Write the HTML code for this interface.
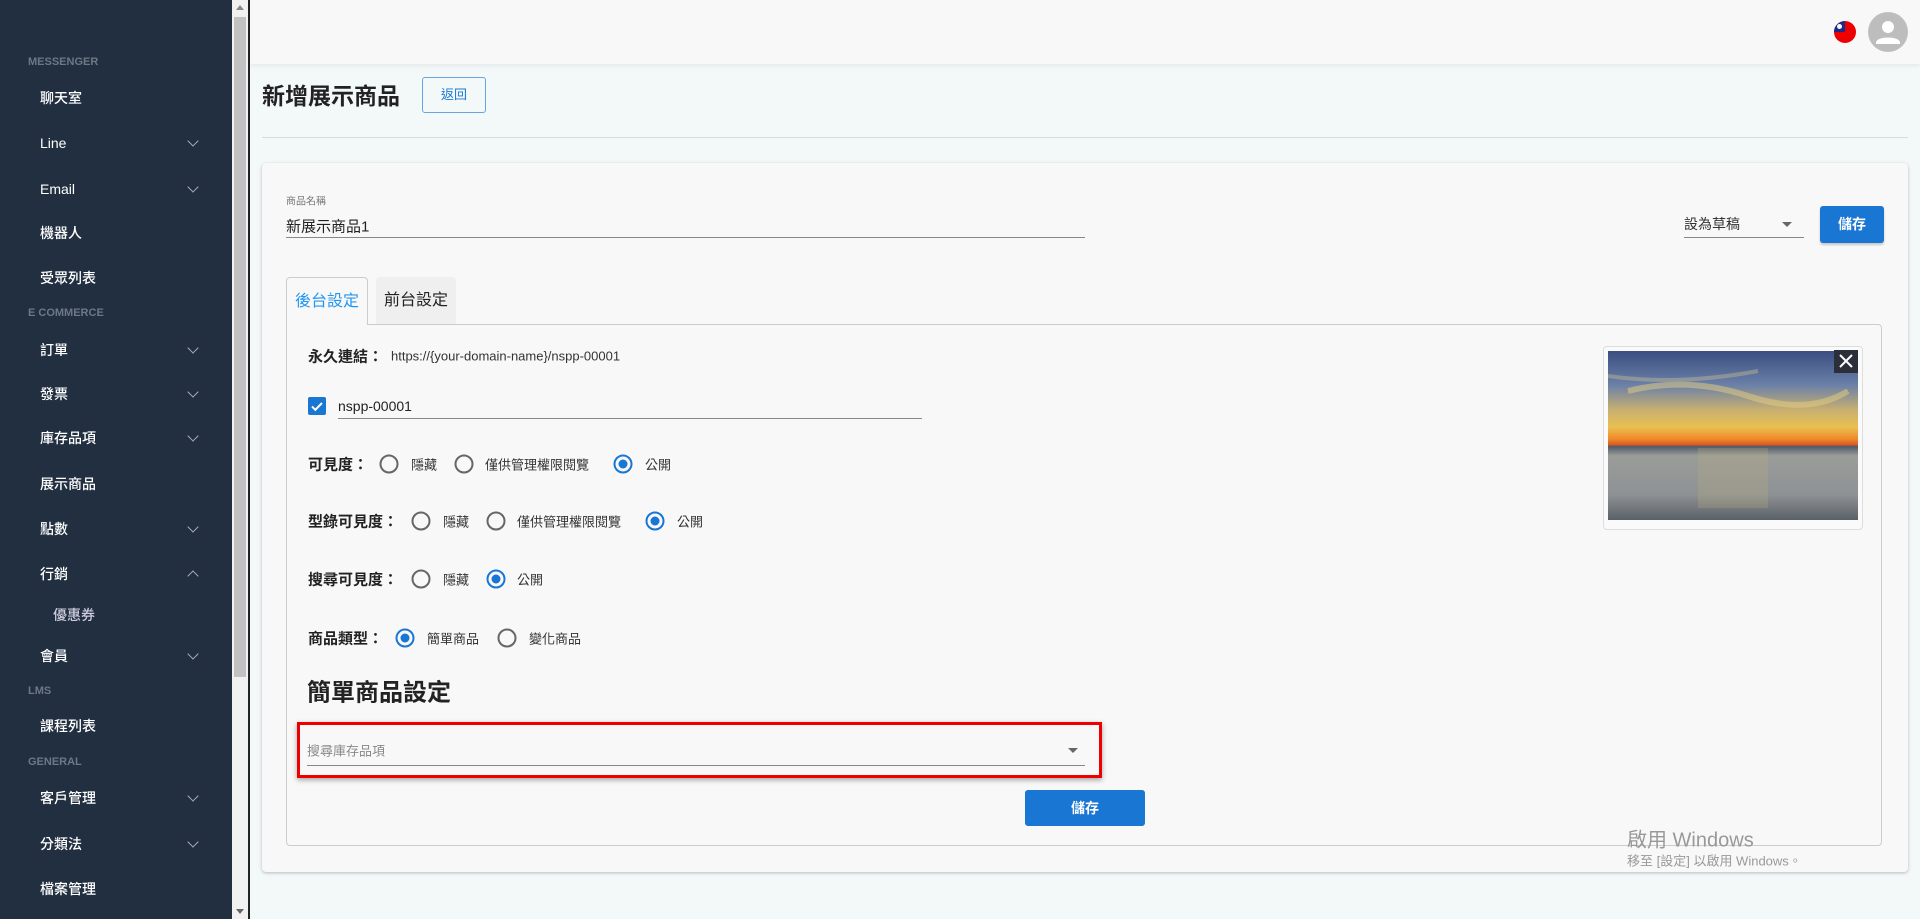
<!DOCTYPE html>
<html><head><meta charset="utf-8"><style>
*{box-sizing:border-box;margin:0;padding:0}
body{width:1920px;height:919px;overflow:hidden;position:relative;background:#f3f8f8;font-family:"Liberation Sans","Noto Sans CJK TC",sans-serif;color:#222}
.a{position:absolute;white-space:nowrap}
#sb{position:absolute;left:0;top:0;width:232px;height:919px;background:#212f40}
.sec{position:absolute;left:28px;font-size:11px;font-weight:bold;color:#6c7886;transform:translateY(-50%)}
.it{position:absolute;left:40px;font-size:14px;color:#fff;transform:translateY(-50%);font-weight:500}
.chev{position:absolute;left:189px;width:8px;height:8px;border-right:1.5px solid #aab;border-bottom:1.5px solid #aab;transform:translateY(-75%) rotate(45deg)}
.chev.up{transform:translateY(-25%) rotate(-135deg)}
.rad{position:absolute;width:19px;height:19px;border:2px solid #666;border-radius:50%;transform:translate(-50%,-50%)}
.rad.on{border-color:#1976d2}
.rad.on::after{content:"";position:absolute;left:3px;top:3px;width:9px;height:9px;border-radius:50%;background:#1976d2}
.lbl{position:absolute;font-size:15px;font-weight:bold;color:#222;transform:translateY(-50%)}
.opt{position:absolute;font-size:13px;color:#333;transform:translateY(-50%)}
</style></head><body>
<div id="sb">
<div class="sec" style="top:62px">MESSENGER</div>
<div class="it" style="top:98px">聊天室</div>
<div class="it" style="top:143px">Line</div><div class="chev" style="top:143px"></div>
<div class="it" style="top:189px">Email</div><div class="chev" style="top:189px"></div>
<div class="it" style="top:233px">機器人</div>
<div class="it" style="top:278px">受眾列表</div>
<div class="sec" style="top:313px">E COMMERCE</div>
<div class="it" style="top:350px">訂單</div><div class="chev" style="top:350px"></div>
<div class="it" style="top:394px">發票</div><div class="chev" style="top:394px"></div>
<div class="it" style="top:438px">庫存品項</div><div class="chev" style="top:438px"></div>
<div class="it" style="top:484px">展示商品</div>
<div class="it" style="top:529px">點數</div><div class="chev" style="top:529px"></div>
<div class="it" style="top:574px">行銷</div><div class="chev up" style="top:574px"></div>
<div class="it" style="top:615px;left:53px;color:#ccd">優惠券</div>
<div class="it" style="top:656px">會員</div><div class="chev" style="top:656px"></div>
<div class="sec" style="top:691px">LMS</div>
<div class="it" style="top:726px">課程列表</div>
<div class="sec" style="top:762px">GENERAL</div>
<div class="it" style="top:798px">客戶管理</div><div class="chev" style="top:798px"></div>
<div class="it" style="top:844px">分類法</div><div class="chev" style="top:844px"></div>
<div class="it" style="top:889px">檔案管理</div>
</div>
<div class="a" style="left:232px;top:0;width:16px;height:919px;background:#f1f1f1"></div>
<div class="a" style="left:234px;top:17px;width:12px;height:660px;background:#c1c1c1"></div>
<div class="a" style="left:236px;top:5px;width:0;height:0;border:4px solid transparent;border-bottom:5px solid #888;border-top:0"></div>
<div class="a" style="left:236px;top:909px;width:0;height:0;border:4px solid transparent;border-top:5px solid #666;border-bottom:0"></div>
<div class="a" style="left:248px;top:0;width:2px;height:919px;background:#222"></div>

<div class="a" style="left:250px;top:0;width:1670px;height:64px;background:#f8f8f8;box-shadow:0 2px 4px rgba(0,0,0,.06)"></div>
<svg class="a" style="left:1834px;top:21px" width="22" height="22" viewBox="0 0 22 22"><defs><clipPath id="c"><circle cx="11" cy="11" r="11"/></clipPath></defs><g clip-path="url(#c)"><rect width="22" height="22" fill="#e00"/><rect width="11" height="11" fill="#1c2a8c"/><circle cx="5.5" cy="5.5" r="2.5" fill="#fff"/></g></svg>
<svg class="a" style="left:1868px;top:12px" width="40" height="40" viewBox="0 0 40 40"><circle cx="20" cy="20" r="20" fill="#bdbdbd"/><circle cx="20" cy="15" r="6" fill="#fff"/><path d="M8 30c2-6 22-6 24 0v2H8z" fill="#fff"/></svg>

<div class="a" style="left:262px;top:94px;font-size:23px;font-weight:bold;transform:translateY(-50%)">新增展示商品</div>
<div class="a" style="left:422px;top:77px;width:64px;height:36px;border:1px solid #6aa4e0;border-radius:3px;color:#1976d2;font-size:13px;text-align:center;line-height:34px">返回</div>
<div class="a" style="left:262px;top:137px;width:1646px;height:1px;background:#d6dcdc"></div>

<div class="a" style="left:262px;top:163px;width:1646px;height:709px;background:#f8f8f8;border-radius:4px;box-shadow:0 1px 3px rgba(0,0,0,.25)"></div>
<div class="a" style="left:286px;top:200px;font-size:10px;color:#777;transform:translateY(-50%)">商品名稱</div>
<div class="a" style="left:286px;top:226px;font-size:15px;transform:translateY(-50%)">新展示商品1</div>
<div class="a" style="left:286px;top:237px;width:799px;height:1px;background:#888"></div>
<div class="a" style="left:1684px;top:224px;font-size:14px;transform:translateY(-50%);color:#333">設為草稿</div>
<div class="a" style="left:1782px;top:222px;border:5px solid transparent;border-top:5px solid #666;border-bottom:0"></div>
<div class="a" style="left:1684px;top:237px;width:120px;height:1px;background:#888"></div>
<div class="a" style="left:1820px;top:206px;width:64px;height:37px;background:#1976d2;border-radius:3px;color:#fff;font-size:14px;font-weight:bold;text-align:center;line-height:37px;box-shadow:0 2px 2px rgba(0,0,0,.2)">儲存</div>

<div class="a" style="left:286px;top:324px;width:1596px;height:522px;border:1px solid #ccc;border-radius:0 4px 4px 4px"></div>
<div class="a" style="left:286px;top:277px;width:82px;height:48px;border:1px solid #ccc;border-bottom:none;border-radius:4px 4px 0 0;background:#f8f8f8;color:#2196f3;font-size:16px;text-align:center;line-height:48px">後台設定</div>
<div class="a" style="left:376px;top:277px;width:80px;height:47px;background:#efefef;border-radius:4px 4px 0 0;font-size:16px;text-align:center;line-height:48px">前台設定</div>

<div class="lbl" style="left:308px;top:356px">永久連結：</div>
<div class="opt" style="left:391px;top:356px;font-size:13px">https://{your-domain-name}/nspp-00001</div>
<div class="a" style="left:308px;top:397px;width:18px;height:18px;background:#1976d2;border-radius:2px"></div>
<svg class="a" style="left:308px;top:397px" width="18" height="18" viewBox="0 0 18 18"><path d="M4 9.5l3.3 3.3L14 6" stroke="#fff" stroke-width="2" fill="none"/></svg>
<div class="a" style="left:338px;top:406px;font-size:14px;transform:translateY(-50%)">nspp-00001</div>
<div class="a" style="left:338px;top:418px;width:584px;height:1px;background:#888"></div>

<div class="lbl" style="left:308px;top:464px">可見度：</div>
<div class="rad" style="left:389px;top:464px"></div><div class="opt" style="left:411px;top:464px">隱藏</div>
<div class="rad" style="left:464px;top:464px"></div><div class="opt" style="left:485px;top:464px">僅供管理權限閱覽</div>
<div class="rad on" style="left:623px;top:464px"></div><div class="opt" style="left:645px;top:464px">公開</div>

<div class="lbl" style="left:308px;top:521px">型錄可見度：</div>
<div class="rad" style="left:421px;top:521px"></div><div class="opt" style="left:443px;top:521px">隱藏</div>
<div class="rad" style="left:496px;top:521px"></div><div class="opt" style="left:517px;top:521px">僅供管理權限閱覽</div>
<div class="rad on" style="left:655px;top:521px"></div><div class="opt" style="left:677px;top:521px">公開</div>

<div class="lbl" style="left:308px;top:579px">搜尋可見度：</div>
<div class="rad" style="left:421px;top:579px"></div><div class="opt" style="left:443px;top:579px">隱藏</div>
<div class="rad on" style="left:496px;top:579px"></div><div class="opt" style="left:517px;top:579px">公開</div>

<div class="lbl" style="left:308px;top:638px">商品類型：</div>
<div class="rad on" style="left:405px;top:638px"></div><div class="opt" style="left:427px;top:638px">簡單商品</div>
<div class="rad" style="left:507px;top:638px"></div><div class="opt" style="left:529px;top:638px">變化商品</div>

<div class="a" style="left:307px;top:690px;font-size:24px;font-weight:bold;transform:translateY(-50%)">簡單商品設定</div>
<div class="a" style="left:297px;top:722px;width:805px;height:56px;border:3px solid #e00;box-shadow:0 2px 5px rgba(0,0,0,.35)"></div>
<div class="a" style="left:307px;top:750px;font-size:13px;color:#888;transform:translateY(-50%)">搜尋庫存品項</div>
<div class="a" style="left:1068px;top:748px;border:5px solid transparent;border-top:5px solid #666;border-bottom:0"></div>
<div class="a" style="left:307px;top:765px;width:778px;height:1px;background:#888"></div>
<div class="a" style="left:1025px;top:790px;width:120px;height:36px;background:#1976d2;border-radius:3px;color:#fff;font-size:14px;font-weight:bold;text-align:center;line-height:36px">儲存</div>

<div class="a" style="left:1603px;top:346px;width:260px;height:184px;border:1px solid #ddd;border-radius:4px;background:#fafafa"></div>
<svg class="a" style="left:1608px;top:351px" width="250" height="169" viewBox="0 0 250 169"><defs><linearGradient id="g" x1="0" y1="0" x2="0" y2="1"><stop offset="0" stop-color="#3a4f80"/><stop offset=".2" stop-color="#6a80a8"/><stop offset=".35" stop-color="#c8b070"/><stop offset=".45" stop-color="#e8c050"/><stop offset=".52" stop-color="#f08a2a"/><stop offset=".555" stop-color="#d85a20"/><stop offset=".565" stop-color="#505a68"/><stop offset=".62" stop-color="#9a9c98"/><stop offset=".85" stop-color="#8e9294"/><stop offset="1" stop-color="#5a6068"/></linearGradient></defs><rect width="250" height="169" fill="url(#g)"/><path d="M20 40q60-15 120 5t100-5" stroke="#e8d080" stroke-width="6" fill="none" opacity=".5"/><path d="M0 25q70 10 150-5" stroke="#d0c090" stroke-width="4" fill="none" opacity=".4"/><rect x="90" y="97" width="70" height="60" fill="#c0b080" opacity=".25"/></svg>
<div class="a" style="left:1834px;top:350px;width:24px;height:23px;background:#2a2f3a"></div>
<svg class="a" style="left:1834px;top:350px" width="24" height="23" viewBox="0 0 24 23"><path d="M6 5l12 12M18 5L6 17" stroke="#fff" stroke-width="2"/></svg>

<div class="a" style="left:1627px;top:838px;font-size:20px;color:#999;transform:translateY(-50%)">啟用 Windows</div>
<div class="a" style="left:1627px;top:860px;font-size:13px;color:#999;transform:translateY(-50%)">移至 [設定] 以啟用 Windows。</div>
</body></html>
